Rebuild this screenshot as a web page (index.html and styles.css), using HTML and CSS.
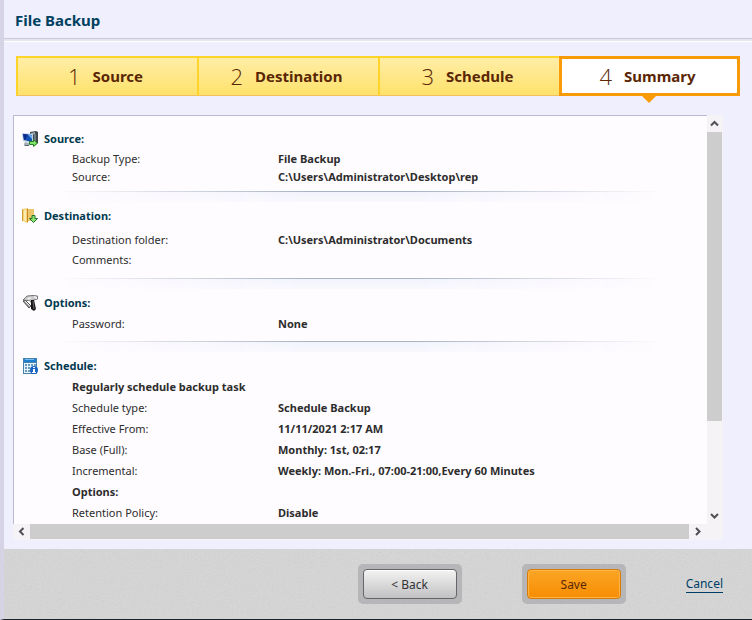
FILE: index.html
```html
<!DOCTYPE html>
<html lang="en">
<head>
<meta charset="utf-8">
<title>File Backup</title>
<link rel="stylesheet" href="styles.css">
</head>
<body>
<header class="title-bar"><h1>File Backup</h1></header>
<main class="wizard">
  <nav class="steps" aria-label="Backup steps">
    <button class="step" type="button"><span class="num">1</span>Source</button>
    <button class="step" type="button"><span class="num">2</span>Destination</button>
    <button class="step" type="button"><span class="num">3</span>Schedule</button>
    <button class="step current" type="button" aria-current="step"><span class="num">4</span>Summary</button>
  </nav>
  <div class="panel">
    <div class="summary">
      <section class="source">
        <h2>
          <svg class="icon" viewBox="0 0 16 16" aria-hidden="true">
            <path d="M8 1l6-1 2 1v11l-3 2-5-3z" fill="#3d474c"/><path d="M9 2l4-1v2l-4 1z" fill="#9ba9ae"/><path d="M12 3h2v7h-2z" fill="#6e7b81"/>
            <path d="M0 2l11 1v9L1 10z" fill="#b9cde4"/><path d="M1 3l9 1v7L2 9z" fill="#164fb4"/><path d="M1 3l5 .5L3 9H2z" fill="#0b2b8d"/><path d="M6 4l4 .3V8z" fill="#69b0ef"/>
            <path d="M3 11l4 1v2H2v-1z" fill="#a5b1b8"/><path d="M2 14h5v1H3z" fill="#59666e"/>
            <path d="M7.500 10.500h4V8.500l4 3.700-4 3.300v-2h-4z" fill="#83e368" stroke="#237c26"/>
          </svg>Source:</h2>
        <dl>
          <dt>Backup Type:</dt><dd>File Backup</dd>
          <dt>Source:</dt><dd>C:\Users\Administrator\Desktop\rep</dd>
        </dl>
      </section>
      <section class="destination">
        <h2>
          <svg class="icon" viewBox="0 0 16 16" aria-hidden="true">
            <path d="M5 1h7v12H5z" fill="#e1a83c"/><path d="M1 1l4-1v15l-4-2z" fill="#f4d278"/><path d="M5 0l1 1v14l-1-1z" fill="#c98a26"/><path d="M6 1h6v12H6z" fill="#edc66a"/><path d="M2 2l2-.5V13l-2-1z" fill="#ffeaae"/><path d="M0 1h1v12H0z" fill="#d19a35"/>
            <path d="M10 7.500h3v3h2.500l-4 4-4-4H10z" fill="#88e56e" stroke="#26702b"/>
          </svg>Destination:</h2>
        <dl>
          <dt>Destination folder:</dt><dd>C:\Users\Administrator\Documents</dd>
          <dt>Comments:</dt><dd></dd>
        </dl>
      </section>
      <section class="options">
        <h2>
          <svg class="icon" viewBox="0 0 16 16" aria-hidden="true">
            <path d="M1 5l4-4 6-.5 4.500.5v3l-4 1-2 3-2-3-4 1z" fill="#c8c8c8" stroke="#777"/>
            <path d="M5 3l5-1-3 3z" fill="#f3f3f3"/><path d="M1 6l2-1 6 6-2 2z" fill="#a2a2a2" stroke="#555"/><path d="M3 6l5 5" stroke="#eee"/>
            <path d="M9 5h3l2 9-2 2-3-2z" fill="#161616"/><path d="M11 6l1 8" stroke="#666"/><path d="M12 1l3 1v2l-3-1z" fill="#eee"/>
          </svg>Options:</h2>
        <dl><dt>Password:</dt><dd>None</dd></dl>
      </section>
      <section class="schedule">
        <h2>
          <svg class="icon" viewBox="0 0 16 16" aria-hidden="true">
            <path d="M1 0h14v16H1z" fill="#4781ae"/><path d="M2 1h12v3H2z" fill="#1e7fd0"/><path d="M3 1h9v1H3z" fill="#79bdf0"/><path d="M2 5h12v10H2z" fill="#e9f3fa"/>
            <path d="M3 6h2v2H3zm3 0h2v2H6zm3 0h2v2H9zm3 0h2v2h-2zM3 9h2v2H3zm3 0h2v2H6zm3 0h2v2H9zm-6 3h2v2H3zm3 0h2v2H6z" fill="#6599c0"/>
            <circle cx="12" cy="12" r="4" fill="#1762c5"/><path d="M11 9h2v1h-2zm0 2h2v3h1v1h-4v-1h1z" fill="#fff"/>
          </svg>Schedule:</h2>
        <h3>Regularly schedule backup task</h3>
        <dl>
          <dt>Schedule type:</dt><dd>Schedule Backup</dd>
          <dt>Effective From:</dt><dd>11/11/2021 2:17 AM</dd>
          <dt>Base (Full):</dt><dd>Monthly: 1st, 02:17</dd>
          <dt>Incremental:</dt><dd>Weekly: Mon.-Fri., 07:00-21:00,Every 60 Minutes</dd>
        </dl>
        <h3>Options:</h3>
        <dl><dt>Retention Policy:</dt><dd>Disable</dd></dl>
      </section>
    </div>
    <div class="bar vertical">
      <button type="button" aria-label="Scroll up"><svg viewBox="0 0 9 9"><path d="M1 6.500L4.500 3 8 6.500"/></svg></button>
      <div class="track"><div class="thumb"></div></div>
      <button type="button" aria-label="Scroll down"><svg viewBox="0 0 9 9"><path d="M1 3l3.500 3.500L8 3"/></svg></button>
    </div>
    <div class="bar horizontal">
      <button type="button" aria-label="Scroll left"><svg viewBox="0 0 9 9"><path d="M6.500 1L3 4.500 6.500 8"/></svg></button>
      <div class="track"><div class="thumb"></div></div>
      <button type="button" aria-label="Scroll right"><svg viewBox="0 0 9 9"><path d="M3 1l3.500 3.500L3 8"/></svg></button>
    </div>
  </div>
</main>
<footer class="actions">
  <svg class="grain" aria-hidden="true">
    <filter id="grain"><feTurbulence type="fractalNoise" baseFrequency=".6" numOctaves="2" seed="3"/><feColorMatrix type="saturate" values="0"/></filter>
    <rect width="100%" height="100%" filter="url(#grain)"/>
  </svg>
  <div class="frame"><button class="back" type="button">&lt; Back</button></div>
  <div class="frame"><button class="save" type="button">Save</button></div>
  <a href="#">Cancel</a>
</footer>
</body>
</html>
```
FILE: styles.css
```css
* { box-sizing: border-box; }

body {
  margin: 0;
  height: 100vh;
  display: flex;
  flex-direction: column;
  border-left: 4px solid #d6d3e4;
  border-bottom: 1px solid #1c222c;
  background: #efeffe;
  color: #2d2d2d;
  font: 12px/20px "Noto Sans", "Open Sans", sans-serif;
}

h1, h2, h3, dl, dd { margin: 0; }
button { font: inherit; }

.title-bar {
  height: 42px;
  padding: 8px 11px 0;
  border-bottom: 1px solid #fff;
  background: linear-gradient(#cac8da, #cac8da) 0 38px / 100% 1px no-repeat, linear-gradient(#e6e6ee, #e6e6ee) 0 39px / 100% 2px no-repeat;
}

h1 {
  color: #00415f;
  font-size: 15px;
  line-height: 24px;
}

.wizard {
  flex: 1;
  min-height: 0;
  display: flex;
  flex-direction: column;
  padding: 14px 12px 9px;
}

.steps {
  display: grid;
  grid-template-columns: repeat(4, 1fr);
  height: 40px;
}

.step {
  position: relative;
  display: flex;
  align-items: center;
  justify-content: center;
  gap: 12px;
  padding: 0 4px 1px 0;
  border: solid #ffd42a;
  border-width: 2px 0 1px 2px;
  border-bottom-color: #f3bf5f;
  background: linear-gradient(#ffeda6, #ffe26b);
  color: #5a2604;
  font-size: 15px;
  font-weight: 700;
}

.num {
  font: 300 22px/30px "Open Sans", "Noto Sans", sans-serif;
}

.step.current {
  padding-bottom: 0;
  border: 3px solid #f99b09;
  background: #fff;
}

.step.current::after {
  content: "";
  position: absolute;
  top: 100%;
  left: 50%;
  margin: 2px 0 0 -9px;
  border: solid transparent;
  border-width: 8px 8px 0;
  border-top-color: #f99b09;
}

.panel {
  flex: 1;
  min-height: 0;
  display: grid;
  grid-template: minmax(0, 1fr) 16px / minmax(0, 1fr) 16px;
  margin: 19px 17px 0 -3px;
}

.summary {
  overflow: hidden;
  padding: 13px 8px 0;
  border: solid #b9b9cf;
  border-width: 1px 0 0 1px;
  background: #fffcff;
  font-size: 11px;
}

section { position: relative; padding-bottom: 8px; }
.source { padding-bottom: 5px; }
.options { padding-bottom: 7px; }

section + section { padding-top: 15px; }

section + section::before {
  content: "";
  position: absolute;
  inset: 0 0 auto;
  height: 10px;
  border-top: 1px solid #a8b4c4;
  background: linear-gradient(#f2f3fc, #f9f8fe);
  -webkit-mask: linear-gradient(90deg, transparent 5%, #000 42%, #000 58%, transparent 95%);
  mask: linear-gradient(90deg, transparent 5%, #000 42%, #000 58%, transparent 95%);
}

h2 {
  display: flex;
  align-items: center;
  gap: 6px;
  color: #003a4f;
  font-size: inherit;
}

.icon { width: 16px; height: 16px; }

h3 {
  padding-left: 50px;
  font-size: inherit;
  line-height: 21px;
}

dl {
  display: grid;
  grid-template-columns: 206px 1fr;
  padding-left: 50px;
  line-height: 21px;
}

dd { font-weight: 700; white-space: nowrap; }

.source dl { padding-top: 1px; line-height: 18px; }
.destination dl { padding-top: 4px; line-height: 20px; grid-auto-rows: 20px; }

.bar { display: flex; background: #f6f3f7; }
.bar.vertical { flex-direction: column; }
.bar.horizontal { grid-column: 1 / -1; padding-right: 17px; }

.bar button {
  flex: none;
  display: grid;
  place-items: center;
  width: 15px;
  height: 17px;
  padding: 0;
  border: 0;
  background: transparent;
}

.bar.horizontal button { width: 17px; height: 15px; }
.bar svg { width: 9px; height: 9px; fill: none; stroke: #505054; stroke-width: 2; }
.track { flex: 1; display: flex; min-width: 0; }
.thumb { background: #cdcdcd; }
.vertical .thumb { width: 15px; height: 77%; }
.horizontal .thumb { width: 100%; height: 15px; }

.actions {
  position: relative;
  flex: none;
  display: flex;
  align-items: center;
  justify-content: flex-end;
  gap: 60px;
  padding: 15px 29px;
  background: #d6d6d6;
}

.grain {
  position: absolute;
  inset: 0;
  width: 100%;
  height: 100%;
  opacity: .16;
}

.frame {
  position: relative;
  padding: 5px;
  border-radius: 5px;
  background: #b6b6b8;
}

.frame button {
  display: block;
  width: 94px;
  height: 30px;
  padding: 1px 0 0;
  border: 1px solid #66666a;
  border-radius: 4px;
  background: linear-gradient(#f3f3f3, #c1c1c3);
  box-shadow: inset 0 1px #fff;
  color: #333;
}

.frame .save {
  border-color: #d57a06;
  background: linear-gradient(#fba526, #f78d02);
  box-shadow: inset 0 0 0 1px #ffb447;
  color: #5a2604;
}

.actions a {
  position: relative;
  border-bottom: 1px solid #003e66;
  color: #003e66;
  line-height: 16px;
  text-decoration: none;
}
```
